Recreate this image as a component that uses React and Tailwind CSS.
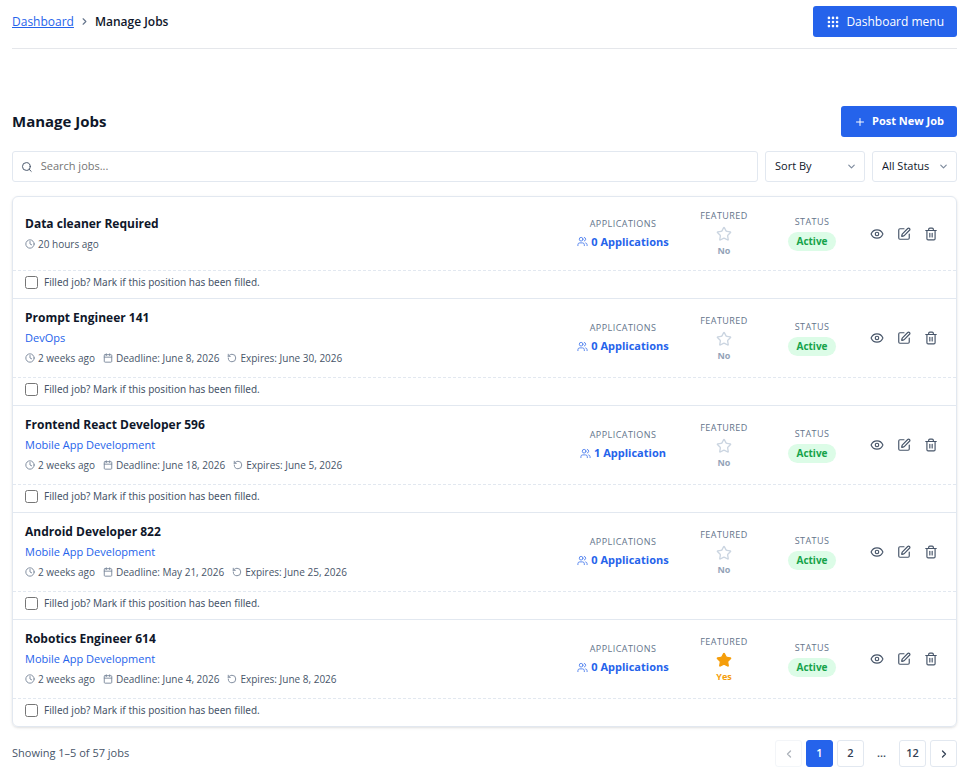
import React, { useState } from "react";
import {
  Calendar,
  ChevronDown,
  ChevronLeft,
  ChevronRight,
  Clock,
  Eye,
  Grip,
  Plus,
  RotateCcw,
  Search,
  SquarePen,
  Star,
  Trash2,
  Users,
} from "lucide-react";

const jobs = [
  { id: 1, title: "Data cleaner Required", posted: "20 hours ago", applications: 0, featured: false },
  {
    id: 2,
    title: "Prompt Engineer 141",
    category: "DevOps",
    posted: "2 weeks ago",
    deadline: "June 8, 2026",
    expires: "June 30, 2026",
    applications: 0,
    featured: false,
  },
  {
    id: 3,
    title: "Frontend React Developer 596",
    category: "Mobile App Development",
    posted: "2 weeks ago",
    deadline: "June 18, 2026",
    expires: "June 5, 2026",
    applications: 1,
    featured: false,
  },
  {
    id: 4,
    title: "Android Developer 822",
    category: "Mobile App Development",
    posted: "2 weeks ago",
    deadline: "May 21, 2026",
    expires: "June 25, 2026",
    applications: 0,
    featured: false,
  },
  {
    id: 5,
    title: "Robotics Engineer 614",
    category: "Mobile App Development",
    posted: "2 weeks ago",
    deadline: "June 4, 2026",
    expires: "June 8, 2026",
    applications: 0,
    featured: true,
  },
];

function ColumnLabel({ children }) {
  return (
    <span className="text-[9px] leading-3 font-medium uppercase tracking-wider text-[#64748b]">{children}</span>
  );
}

function Meta({ icon: Icon, children }) {
  return (
    <span className="flex items-center gap-[3px]">
      <Icon size={10} strokeWidth={2.25} className="text-[#7c899c]" />
      {children}
    </span>
  );
}

function FilterSelect({ label, value, onChange, options, className }) {
  return (
    <div className={`relative shrink-0 ${className}`}>
      <select
        aria-label={label}
        value={value}
        onChange={(e) => onChange(e.target.value)}
        className="h-[31px] w-full appearance-none rounded-[3px] border border-[#e2e8f0] bg-white pl-[9px] pr-5 text-[11px] font-medium text-[#0f172a]"
      >
        {options.map((option) => (
          <option key={option}>{option}</option>
        ))}
      </select>
      <ChevronDown
        size={11}
        strokeWidth={2.5}
        className="pointer-events-none absolute right-2 top-[10px] text-[#7c899c]"
      />
    </div>
  );
}

function JobRow({ job }) {
  const [filled, setFilled] = useState(false);

  return (
    <li className="border-b border-[#e2e8f0] last:border-b-0">
      <div className={`flex items-center gap-3 px-3 ${job.category ? "min-h-[78px]" : "min-h-[73px]"}`}>
        {/* Job info */}
        <div className="min-w-0 flex-1">
          <h2 className="text-xs leading-5 font-bold text-[#0f172a]">{job.title}</h2>
          {job.category && (
            <a href="#category" className="block w-fit text-[11px] leading-5 text-[#2563eb]">
              {job.category}
            </a>
          )}
          <div className="flex items-center gap-2 text-[10px] leading-5 text-[#475569]">
            <Meta icon={Clock}>{job.posted}</Meta>
            {job.deadline && <Meta icon={Calendar}>Deadline: {job.deadline}</Meta>}
            {job.expires && <Meta icon={RotateCcw}>Expires: {job.expires}</Meta>}
          </div>
        </div>

        <div className="flex w-[100px] shrink-0 flex-col items-center gap-1">
          <ColumnLabel>Applications</ColumnLabel>
          <a
            href="#applications"
            className="flex items-center gap-[3px] whitespace-nowrap text-[11px] leading-4 font-bold text-[#2563eb]"
          >
            <Users size={11} className="opacity-80" />
            {job.applications} {job.applications === 1 ? "Application" : "Applications"}
          </a>
        </div>

        <div className="flex w-[78px] shrink-0 flex-col items-center">
          <ColumnLabel>Featured</ColumnLabel>
          <button
            className={`mt-1 flex flex-col items-center gap-[3px] text-[9px] leading-3 font-bold ${
              job.featured ? "text-[#f59e0b]" : "text-[#94a3b8]"
            }`}
          >
            <Star size={16} className={job.featured ? "fill-[#f59e0b] text-[#f59e0b]" : "text-[#cbd5e1]"} />
            {job.featured ? "Yes" : "No"}
          </button>
        </div>

        <div className="flex w-[74px] shrink-0 flex-col items-center gap-1">
          <ColumnLabel>Status</ColumnLabel>
          <span className="rounded-full bg-[#dcfce7] px-2 text-[10px] leading-[19px] font-bold text-[#16a34a]">
            Active
          </span>
        </div>

        {/* Actions */}
        <div className="flex w-[83px] shrink-0 justify-end text-[#475569]">
          <button aria-label="View job" className="flex size-[27px] items-center justify-center">
            <Eye size={14} />
          </button>
          <button aria-label="Edit job" className="flex size-[27px] items-center justify-center">
            <SquarePen size={14} />
          </button>
          <button aria-label="Delete job" className="flex size-[27px] items-center justify-center">
            <Trash2 size={14} />
          </button>
        </div>
      </div>

      <label className="flex h-7 items-center gap-[6px] border-t border-dashed border-[#e2e8f0] px-3 pb-1 font-['Noto_Sans','Segoe_UI',sans-serif] text-[10px] text-[#475569]">
        <input
          type="checkbox"
          checked={filled}
          onChange={(e) => setFilled(e.target.checked)}
          className="size-[13px] shrink-0"
        />
        Filled job? Mark if this position has been filled.
      </label>
    </li>
  );
}

const pageButton = "flex size-[27px] items-center justify-center rounded-[3px] border text-[11px] font-semibold";

export default function App() {
  const [search, setSearch] = useState("");
  const [sort, setSort] = useState("Sort By");
  const [status, setStatus] = useState("All Status");

  return (
    <div className="bg-white pl-3 pr-[10px] pb-2 font-['Open_Sans','Segoe_UI',sans-serif] text-[#0f172a]">
      <header className="flex items-center justify-between border-b border-[#e5e7eb] pt-[6px] pb-[11px]">
        <nav aria-label="Breadcrumb" className="flex items-center gap-[5px] text-xs">
          <a href="#dashboard" className="text-[#2563eb] underline">
            Dashboard
          </a>
          <ChevronRight size={11} strokeWidth={2.5} className="text-[#64748b]" />
          <span className="font-semibold">Manage Jobs</span>
        </nav>
        <button className="flex h-[31px] items-center gap-[6px] rounded-[3px] bg-[#2563eb] px-[13px] text-xs font-medium text-white">
          <Grip size={14} strokeWidth={2.5} />
          Dashboard menu
        </button>
      </header>

      <main className="pt-[57px]">
        <div className="flex items-center justify-between">
          <h1 className="text-[15px] font-bold">Manage Jobs</h1>
          <button className="flex h-[31px] items-center gap-[6px] rounded-[3px] bg-[#2563eb] px-[13px] text-[11px] font-bold text-white">
            <Plus size={12} />
            Post New Job
          </button>
        </div>

        {/* Filters */}
        <div className="mt-[14px] flex gap-[7px]">
          <label className="flex h-[31px] flex-1 items-center gap-2 rounded-[3px] border border-[#e2e8f0] px-2">
            <Search size={12} className="text-[#475569]" />
            <input
              type="text"
              aria-label="Search jobs"
              value={search}
              onChange={(e) => setSearch(e.target.value)}
              placeholder="Search jobs..."
              className="w-full text-[11px] outline-none placeholder:text-[#757575]"
            />
          </label>
          <FilterSelect
            label="Sort jobs"
            value={sort}
            onChange={setSort}
            options={["Sort By", "Newest", "Oldest"]}
            className="w-[100px]"
          />
          <FilterSelect
            label="Filter by status"
            value={status}
            onChange={setStatus}
            options={["All Status", "Active", "Expired"]}
            className="w-[85px]"
          />
        </div>

        <ul className="mt-[14px] rounded-md border border-[#e2e8f0] shadow-sm">
          {jobs.map((job) => (
            <JobRow key={job.id} job={job} />
          ))}
        </ul>

        <div className="mt-[13px] flex items-center justify-between">
          <p className="text-[11px] text-[#475569]">Showing 1–5 of 57 jobs</p>
          <nav aria-label="Pagination" className="flex gap-1 text-[#334155]">
            <button disabled aria-label="Previous page" className={`${pageButton} border-[#e2e8f0] opacity-40`}>
              <ChevronLeft size={12} strokeWidth={2.5} />
            </button>
            <button aria-current="page" className={`${pageButton} border-[#2563eb] bg-[#2563eb] text-white`}>
              1
            </button>
            <button className={`${pageButton} border-[#e2e8f0]`}>2</button>
            <span className={`${pageButton} border-transparent`}>...</span>
            <button className={`${pageButton} border-[#e2e8f0]`}>12</button>
            <button aria-label="Next page" className={`${pageButton} border-[#e2e8f0]`}>
              <ChevronRight size={12} strokeWidth={2.5} />
            </button>
          </nav>
        </div>
      </main>
    </div>
  );
}
